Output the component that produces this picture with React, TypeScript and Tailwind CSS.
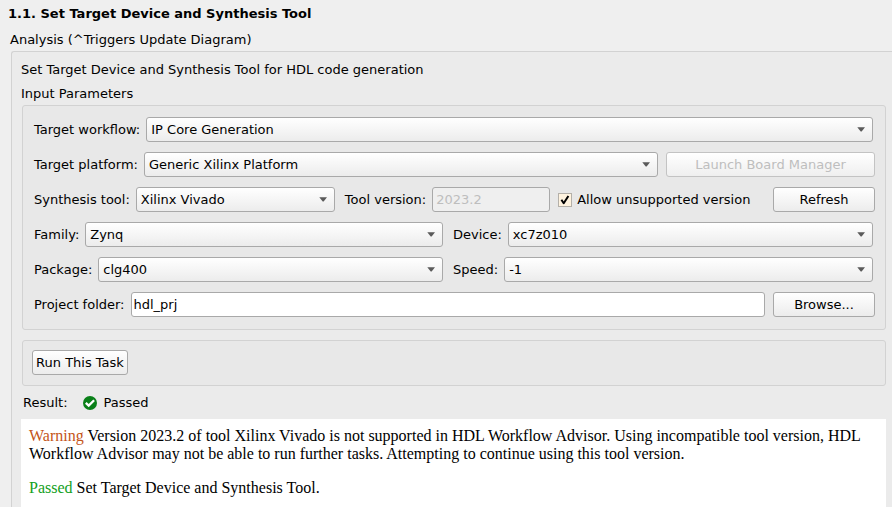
import type { ReactNode } from "react";

const controlBorder = "h-[25px] rounded-[3px] border border-[#a9a9a9]";
const raised = "bg-linear-to-b from-white to-[#ececec]";

function Select({ id, value, className = "" }: { id: string; value: string; className?: string }) {
  return (
    <div className={`relative min-w-0 ${className}`}>
      <select
        id={id}
        defaultValue={value}
        className={`${controlBorder} ${raised} block w-full appearance-none pr-6 pl-1 text-black`}
      >
        <option>{value}</option>
      </select>
      <svg
        viewBox="0 0 8 5"
        className="pointer-events-none absolute top-[10px] right-2 h-[5px] w-2"
        aria-hidden="true"
      >
        <path d="M0.3 0.3h7.7L4.6 4.4h-0.9z" fill="#5a5a5a" />
      </svg>
    </div>
  );
}

function Button({ children, className = "", disabled = false }: { children: ReactNode; className?: string; disabled?: boolean }) {
  return (
    <button
      type="button"
      disabled={disabled}
      className={`${controlBorder} ${raised} shrink-0 whitespace-nowrap disabled:border-[#c3c3c3] disabled:to-[#efefef] disabled:text-[#bebebe] ${className}`}
    >
      {children}
    </button>
  );
}

function Field({ id, label, className = "", children }: { id: string; label: string; className?: string; children: ReactNode }) {
  return (
    <div className={`flex min-w-0 items-center gap-[6px] ${className}`}>
      <label htmlFor={id} className="shrink-0 whitespace-nowrap">
        {label}
      </label>
      {children}
    </div>
  );
}

export default function App() {
  return (
    <main className="flex min-h-screen flex-col bg-[#efefef] pt-[6px] font-['DejaVu_Sans',sans-serif] text-[13px] leading-4 text-black">
      <h1 className="pl-2 font-bold">1.1. Set Target Device and Synthesis Tool</h1>
      <h2 className="mt-[10px] pl-[10px]">Analysis (^Triggers Update Diagram)</h2>

      <section className="mt-[3px] ml-[11px] flex flex-1 flex-col rounded-tl-[3px] border-t border-l border-[#d2d2d2] bg-[#ebebeb] pt-[10px] pr-[6px] pl-[9px]">
        <p>Set Target Device and Synthesis Tool for HDL code generation</p>
        <h3 className="mt-2">Input Parameters</h3>

        <form className="mt-[3px] ml-px flex flex-col gap-[10px] rounded-[3px] border border-[#d2d2d2] bg-[#e8e8e8] pt-[11px] pr-[10px] pb-3 pl-[11px]">
          <Field id="workflow" label="Target workflow:" className="pr-[2px]">
            <Select id="workflow" value="IP Core Generation" className="flex-1" />
          </Field>

          <div className="flex gap-2">
            <Field id="platform" label="Target platform:" className="flex-1">
              <Select id="platform" value="Generic Xilinx Platform" className="flex-1" />
            </Field>
            <Button disabled className="w-[209px]">
              Launch Board Manager
            </Button>
          </div>

          <div className="flex items-center">
            <Field id="tool" label="Synthesis tool:">
              <Select id="tool" value="Xilinx Vivado" className="w-[199px]" />
            </Field>
            <Field id="version" label="Tool version:" className="ml-[10px]">
              <input
                id="version"
                disabled
                defaultValue="2023.2"
                className={`${controlBorder} w-[118px] bg-[#efefef] px-[3px] text-[#bebebe]`}
              />
            </Field>
            <label className="ml-2 flex items-center gap-[5px] whitespace-nowrap">
              <span className="relative block size-[14px]">
                <input
                  type="checkbox"
                  defaultChecked
                  className="peer block size-[14px] appearance-none border border-[#b4b0a9] bg-[#fff3df]"
                />
                <svg
                  viewBox="0 0 14 14"
                  className="pointer-events-none absolute inset-0 hidden size-[14px] peer-checked:block"
                  aria-hidden="true"
                >
                  <path d="M3.4 6.8 5.7 10.2 10.4 3" fill="none" stroke="#000" strokeWidth="2" strokeLinejoin="round" />
                </svg>
              </span>
              Allow unsupported version
            </label>
            <Button className="ml-auto w-[102px]">Refresh</Button>
          </div>

          <div className="grid grid-cols-[409fr_420fr] gap-[10px] pr-[2px]">
            <Field id="family" label="Family:">
              <Select id="family" value="Zynq" className="flex-1" />
            </Field>
            <Field id="device" label="Device:">
              <Select id="device" value="xc7z010" className="flex-1" />
            </Field>
            <Field id="package" label="Package:">
              <Select id="package" value="clg400" className="flex-1" />
            </Field>
            <Field id="speed" label="Speed:">
              <Select id="speed" value="-1" className="flex-1" />
            </Field>
          </div>

          <div className="flex gap-2">
            <Field id="folder" label="Project folder:" className="flex-1">
              <input
                id="folder"
                defaultValue="hdl_prj"
                className={`${controlBorder} min-w-0 flex-1 bg-white px-[2px]`}
              />
            </Field>
            <Button className="w-[102px]">Browse...</Button>
          </div>
        </form>

        <div className="mt-[10px] ml-px rounded-[3px] border border-[#d2d2d2] bg-[#e8e8e8] px-[9px] pt-[9px] pb-[10px]">
          <Button className="block w-[96px]">Run This Task</Button>
        </div>

        <div className="mt-[9px] ml-[2px] flex items-center">
          <span>Result:</span>
          <svg viewBox="0 0 14 14" className="ml-[15px] size-[14px]" aria-hidden="true">
            <circle cx="7" cy="7" r="7" fill="#0a8019" />
            <path d="M2.8 6.8 5.7 9.6 11.1 4.2" fill="none" stroke="#fff" strokeWidth="2.3" />
          </svg>
          <span className="ml-[7px]">Passed</span>
        </div>

        <div className="mt-2 flex-1 bg-white px-2 pt-2 font-['Liberation_Serif',serif] text-[16px] leading-[18px]">
          <p>
            <span className="text-[#c45418]">Warning</span> Version 2023.2 of tool Xilinx Vivado is not supported in HDL
            Workflow Advisor. Using incompatible tool version, HDL Workflow Advisor may not be able to run further tasks.
            Attempting to continue using this tool version.
          </p>
          <p className="mt-4">
            <span className="text-[#12a01c]">Passed</span> Set Target Device and Synthesis Tool.
          </p>
        </div>
      </section>
    </main>
  );
}
